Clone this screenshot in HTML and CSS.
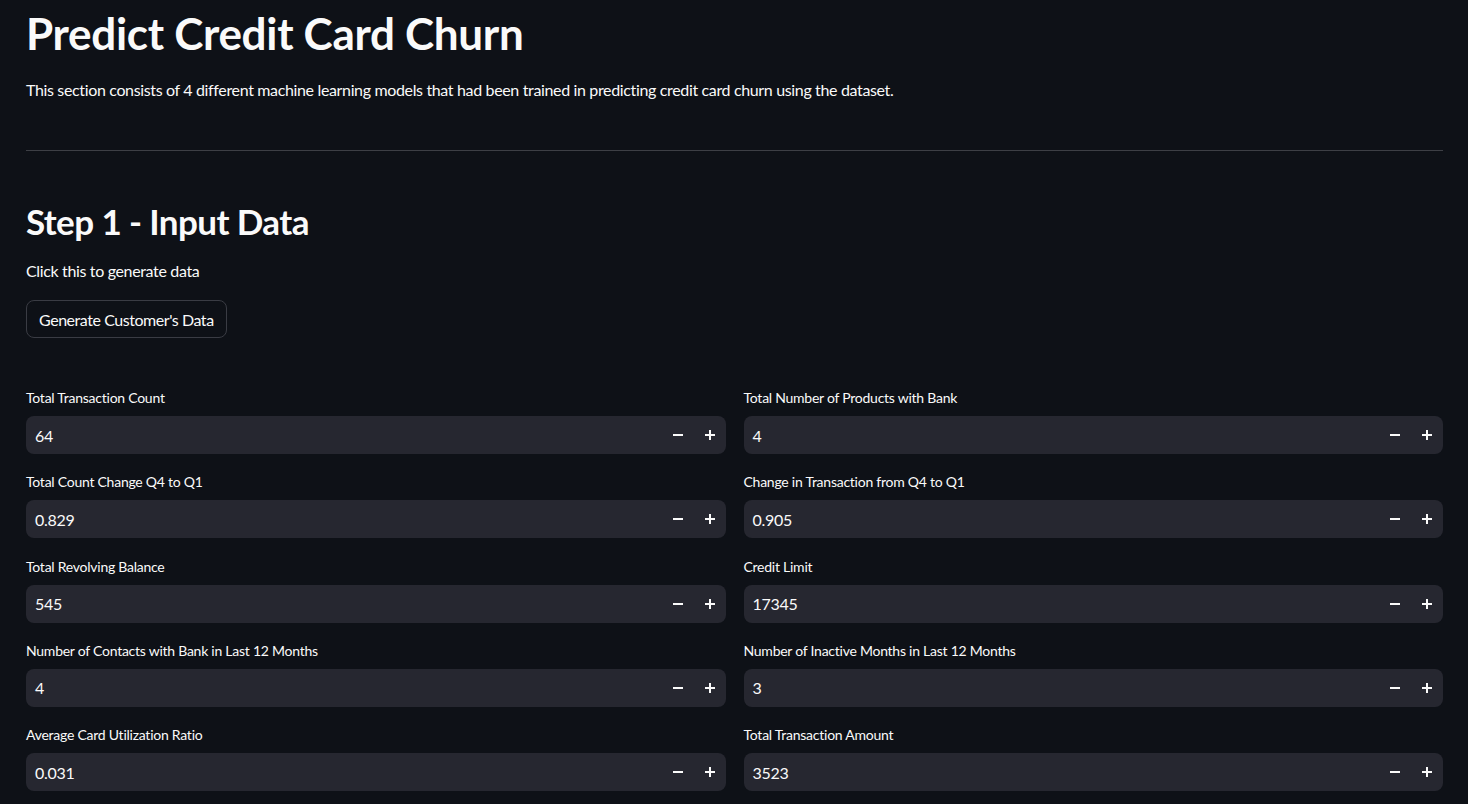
FILE: index.html
```html
<!DOCTYPE html>
<html>
<head>
<meta charset="utf-8">
<link rel="stylesheet" href="styles.css">
</head>
<body>
<main class="main">
  <h1 class="title">Predict Credit Card Churn</h1>
  <p class="text intro">This section consists of 4 different machine learning models that had been trained in predicting credit card churn using the dataset.</p>
  <hr class="divider">
  <h2 class="subtitle">Step 1 - Input Data</h2>
  <p class="text hint">Click this to generate data</p>
  <div class="btn-row"><button class="btn">Generate Customer's Data</button></div>
  <div class="grid">
    <div class="field"><label class="label">Total Transaction Count</label><div class="input"><span class="value">64</span><span class="steps"><span class="step minus"></span><span class="step plus"></span></span></div></div>
    <div class="field"><label class="label">Total Number of Products with Bank</label><div class="input"><span class="value">4</span><span class="steps"><span class="step minus"></span><span class="step plus"></span></span></div></div>
    <div class="field"><label class="label">Total Count Change Q4 to Q1</label><div class="input"><span class="value">0.829</span><span class="steps"><span class="step minus"></span><span class="step plus"></span></span></div></div>
    <div class="field"><label class="label">Change in Transaction from Q4 to Q1</label><div class="input"><span class="value">0.905</span><span class="steps"><span class="step minus"></span><span class="step plus"></span></span></div></div>
    <div class="field"><label class="label">Total Revolving Balance</label><div class="input"><span class="value">545</span><span class="steps"><span class="step minus"></span><span class="step plus"></span></span></div></div>
    <div class="field"><label class="label">Credit Limit</label><div class="input"><span class="value">17345</span><span class="steps"><span class="step minus"></span><span class="step plus"></span></span></div></div>
    <div class="field"><label class="label">Number of Contacts with Bank in Last 12 Months</label><div class="input"><span class="value">4</span><span class="steps"><span class="step minus"></span><span class="step plus"></span></span></div></div>
    <div class="field"><label class="label">Number of Inactive Months in Last 12 Months</label><div class="input"><span class="value">3</span><span class="steps"><span class="step minus"></span><span class="step plus"></span></span></div></div>
    <div class="field"><label class="label">Average Card Utilization Ratio</label><div class="input"><span class="value">0.031</span><span class="steps"><span class="step minus"></span><span class="step plus"></span></span></div></div>
    <div class="field"><label class="label">Total Transaction Amount</label><div class="input"><span class="value">3523</span><span class="steps"><span class="step minus"></span><span class="step plus"></span></span></div></div>
  </div>
</main>
</body>
</html>
```
FILE: styles.css
```css
html, body {
  margin: 0;
  padding: 0;
  background: #0e1117;
  color: #fafafa;
  font-family: "Lato", "Liberation Sans", sans-serif;
  height: 804px;
  overflow: hidden;
}
.main {
  display: flex;
  flex-direction: column;
  padding: 0 25px 0 26px;
}
.title {
  margin: 7px 0 0;
  font-size: 44px;
  font-weight: 700;
  line-height: 52px;
  letter-spacing: -0.3px;
}
.text {
  margin: 0;
  font-size: 16px;
  line-height: 24px;
  letter-spacing: -0.35px;
}
.intro {
  margin-top: 19px;
}
.divider {
  border: none;
  border-top: 1px solid #3d3f45;
  margin: 48px 0 0;
  width: 100%;
}
.subtitle {
  margin: 48px 0 0;
  font-size: 35px;
  font-weight: 700;
  line-height: 44px;
  letter-spacing: -0.6px;
}
.hint {
  margin-top: 16px;
}
.btn-row {
  margin-top: 17px;
}
.btn {
  background: #0e1117;
  color: #fafafa;
  border: 1px solid #3a3c44;
  border-radius: 8px;
  height: 38px;
  padding: 0 12px;
  font-family: inherit;
  font-size: 16px;
  letter-spacing: -0.45px;
}
.grid {
  margin-top: 50px;
  display: grid;
  grid-template-columns: 1fr 1fr;
  column-gap: 18px;
  row-gap: 18.25px;
}
.field {
  display: flex;
  flex-direction: column;
}
.label {
  font-size: 14px;
  line-height: 20px;
  margin-bottom: 8px;
  letter-spacing: -0.25px;
}
.input {
  height: 38px;
  background: #262730;
  border-radius: 8px;
  display: flex;
  align-items: center;
  justify-content: space-between;
  padding-left: 9px;
}
.value {
  font-size: 16px;
  letter-spacing: -0.3px;
}
.steps {
  display: flex;
  height: 100%;
}
.step {
  width: 32px;
  height: 100%;
  position: relative;
}
.step::before, .step::after {
  content: "";
  position: absolute;
  background: #fafafa;
  left: 50%;
  top: 50%;
}
.minus::before, .plus::before {
  width: 10px;
  height: 2px;
  margin: -1px 0 0 -5px;
}
.minus::after { display: none; }
.plus::after {
  width: 2px;
  height: 10px;
  margin: -5px 0 0 -1px;
}
```
